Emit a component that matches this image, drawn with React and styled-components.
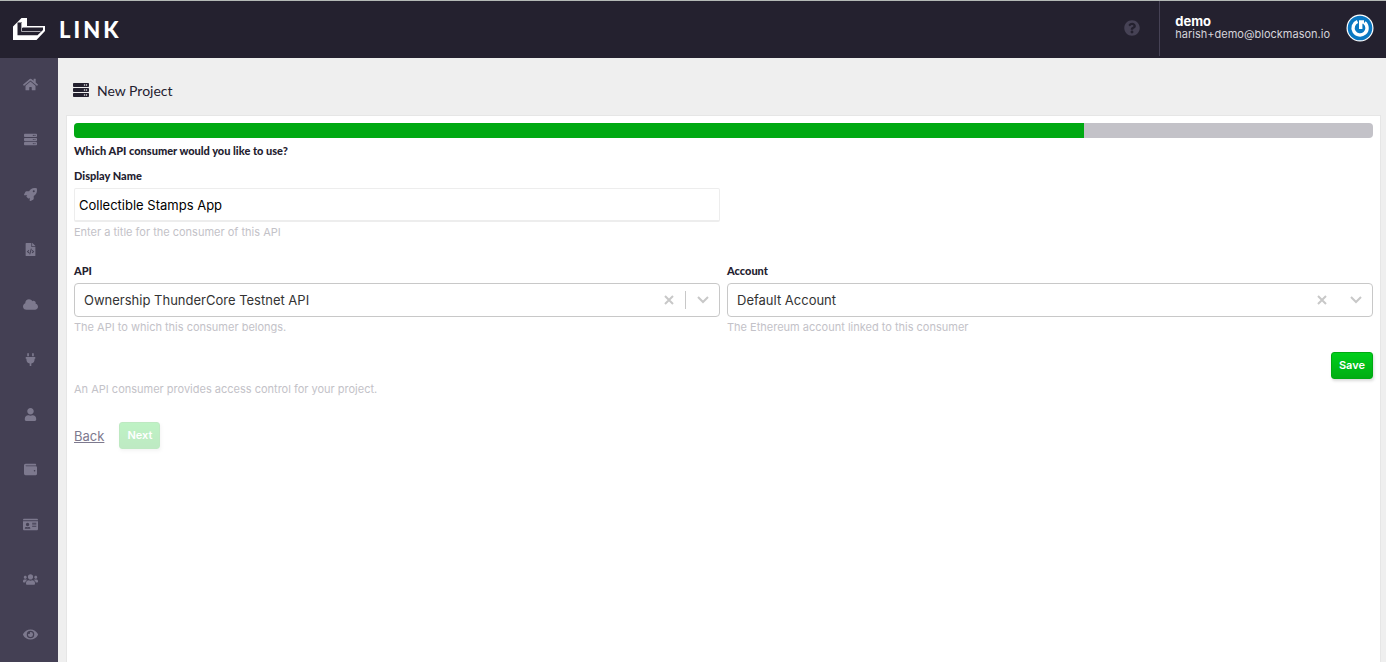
import React, { useState } from 'react'
import styled, { createGlobalStyle } from 'styled-components';
import {
    FaHome,
    FaServer,
    FaRocket,
    FaFileCode,
    FaCloud,
    FaPlug,
    FaUser,
    FaWallet,
    FaIdCard,
    FaUsers,
    FaEye,
    FaQuestionCircle,
} from 'react-icons/fa';

const navItems = [
    { label: 'Home', Icon: FaHome, wide: true },
    { label: 'Projects', Icon: FaServer },
    { label: 'Deployments', Icon: FaRocket },
    { label: 'Contracts', Icon: FaFileCode },
    { label: 'Networks', Icon: FaCloud, wide: true },
    { label: 'Connectors', Icon: FaPlug },
    { label: 'Profile', Icon: FaUser },
    { label: 'Wallets', Icon: FaWallet },
    { label: 'Accounts', Icon: FaIdCard, wide: true },
    { label: 'Team', Icon: FaUsers, wide: true },
    { label: 'Activity', Icon: FaEye, wide: true },
];

function Logo() {
    return (
        <LogoStyled href="#" aria-label="Link home">
            <svg width="34" height="24" viewBox="0 0 34 24" aria-hidden="true">
                <path fill="#fff" d="M9.5 1H15v8h18v5L24.5 23H1V9.5z" />
                <path fill="#24212f" d="M5.500 5.500H10V10.500H31V13L25.500 18.300H5.500z" />
                <path fill="#fff" d="M10 5h1v5.500h-1z" />
                <path fill="none" stroke="#a9a8ae" strokeWidth="1" d="M9.500 6v8.500h19" />
            </svg>
            <span>LINK</span>
        </LogoStyled>
    )
}

function Avatar() {
    return (
        <svg width="28" height="28" viewBox="0 0 28 28" aria-hidden="true">
            <circle cx="14" cy="14" r="13.5" fill="#fff" />
            <circle cx="14" cy="14" r="12.3" fill="#0a78c2" />
            <path
                fill="none"
                stroke="#fff"
                strokeWidth="3.4"
                d="M11.500 7.500A7 7 0 1 0 18.500 8.600M14.700 15V6.500M13 8h5"
            />
        </svg>
    )
}

function SelectField({ id, label, help, options, divided }) {
    const [value, setValue] = useState(options[0]);

    return (
        <Field>
            <Label htmlFor={id}>{label}</Label>
            <SelectBox>
                <select id={id} value={value} onChange={(e) => setValue(e.target.value)}>
                    <option value="" />
                    {options.map((option) => (
                        <option key={option}>{option}</option>
                    ))}
                </select>
                <ClearButton type="button" aria-label={`Clear ${label}`} onClick={() => setValue('')}>
                    <svg width="10" height="10" viewBox="0 0 10 10">
                        <path d="M1 1l8 8M9 1l-8 8" />
                    </svg>
                </ClearButton>
                <Divider $visible={divided} />
                <Chevron width="12" height="8" viewBox="0 0 12 8" aria-hidden="true">
                    <path d="M1 1l5 5 5-5" />
                </Chevron>
            </SelectBox>
            <Help>{help}</Help>
        </Field>
    )
}

function App() {
    const [name, setName] = useState('Collectible Stamps App');
    const step = 7;
    const steps = 9;

    return (
        <PageStyled>
            <GlobalStyle />
            <Header>
                <Logo />
                <HelpButton type="button" aria-label="Help">
                    <FaQuestionCircle />
                </HelpButton>
                <Account>
                    <div>
                        <strong>demo</strong>
                        <p>harish+demo@blockmason.io</p>
                    </div>
                    <Avatar />
                </Account>
            </Header>
            <Body>
                <Sidebar>
                    {navItems.map(({ label, Icon, wide }) => (
                        <NavLink key={label} href="#" aria-label={label} $wide={wide}>
                            <Icon />
                        </NavLink>
                    ))}
                </Sidebar>
                <Main>
                    <Title>
                        <FaServer />
                        New Project
                    </Title>
                    <Panel>
                        <Progress>
                            <div style={{ width: `${(step / steps) * 100}%` }} />
                        </Progress>
                        <Question>Which API consumer would you like to use?</Question>
                        <Columns>
                            <Field>
                                <Label htmlFor="display-name">Display Name</Label>
                                <TextInput
                                    id="display-name"
                                    value={name}
                                    onChange={(e) => setName(e.target.value)}
                                />
                                <Help>Enter a title for the consumer of this API</Help>
                            </Field>
                        </Columns>
                        <Columns>
                            <SelectField
                                id="api"
                                label="API"
                                help="The API to which this consumer belongs."
                                options={['Ownership ThunderCore Testnet API']}
                                divided
                            />
                            <SelectField
                                id="account"
                                label="Account"
                                help="The Ethereum account linked to this consumer"
                                options={['Default Account']}
                            />
                        </Columns>
                        <SaveRow>
                            <Button type="button">Save</Button>
                        </SaveRow>
                        <Help>An API consumer provides access control for your project.</Help>
                        <Actions>
                            <a href="#">Back</a>
                            <Button type="button" disabled>Next</Button>
                        </Actions>
                    </Panel>
                </Main>
            </Body>
        </PageStyled>
    )
}

const GlobalStyle = createGlobalStyle`
    *{
        box-sizing: border-box;
        margin: 0;
        padding: 0;
    }

    body{
        background: #efefef;
        color: #24212f;
        font-family: Inter, "Liberation Sans", sans-serif;
        font-size: 13px;
    }

    button, input, select{
        font-family: inherit;
    }

    svg{
        display: block;
    }
`;

const PageStyled = styled.div`
    display: flex;
    flex-direction: column;
    height: 100vh;
    overflow: hidden;
`;

const Header = styled.header`
    display: flex;
    flex-shrink: 0;
    height: 58px;
    background: #24212f;
    border-top: 1px solid #b4b9b6;
`;

const LogoStyled = styled.a`
    display: flex;
    align-items: center;
    gap: 13px;
    margin-right: auto;
    padding: 0 0 1px 12px;
    color: #fff;
    font-family: Lato, sans-serif;
    font-size: 22px;
    font-weight: 900;
    letter-spacing: 3px;
    text-decoration: none;
`;

const HelpButton = styled.button`
    padding: 0 19px 3px;
    border: none;
    background: none;
    color: #464255;
    font-size: 16px;
    cursor: pointer;
`;

const Account = styled.div`
    display: flex;
    align-items: center;
    gap: 16px;
    height: 55px;
    padding: 0 12px 2px 15px;
    border-left: 1px solid #464255;
    color: #fff;

    strong{
        display: block;
        font-size: 13px;
        font-weight: 700;
        line-height: 13px;
    }

    p{
        color: #d5d4da;
        font-size: 11px;
        line-height: 13px;
    }
`;

const Body = styled.div`
    display: flex;
    flex: 1;
    min-height: 0;
`;

const Sidebar = styled.nav`
    flex: 0 0 58px;
    overflow: hidden;
    background: #444054;
`;

const NavLink = styled.a`
    display: flex;
    align-items: center;
    justify-content: center;
    height: 55px;
    padding: 0 0 2px 3px;
    color: #7d798e;
    font-size: ${({ $wide }) => ($wide ? '15px' : '13px')};
`;

const Main = styled.main`
    display: flex;
    flex: 1;
    flex-direction: column;
    min-width: 0;
    padding: 0 5px 0 8px;
`;

const Title = styled.h1`
    display: flex;
    align-items: center;
    gap: 8px;
    height: 57px;
    padding: 7px 7px 0;
    font-family: Lato, sans-serif;
    font-size: 14px;
    font-weight: 400;

    svg{
        font-size: 16px;
    }
`;

const Panel = styled.section`
    flex: 1;
    padding: 7px;
    border: 1px solid #e6e6e6;
    border-bottom: none;
    background: #fff;
`;

const Progress = styled.div`
    height: 15px;
    overflow: hidden;
    border-radius: 4px;
    background: #c3c2c8;

    div{
        height: 100%;
        background: #00a912;
    }
`;

const Question = styled.h2`
    padding: 5px 0 9px;
    font-family: Lato, sans-serif;
    font-size: 11px;
    font-weight: 900;
    line-height: 16px;
`;

const Columns = styled.div`
    display: grid;
    grid-template-columns: 1fr 1fr;
    gap: 7px;

    & + &{
        margin-top: 23px;
    }
`;

const Field = styled.div`
    display: flex;
    flex-direction: column;
`;

const Label = styled.label`
    margin-bottom: 4px;
    font-family: Lato, sans-serif;
    font-size: 11px;
    font-weight: 900;
    line-height: 16px;
`;

const TextInput = styled.input`
    height: 34px;
    padding: 0 4px;
    border: 1px solid #ededed;
    border-bottom-width: 2px;
    border-radius: 2px;
    background: #fff;
    color: #000;
    font-size: 13px;
`;

const SelectBox = styled.div`
    display: flex;
    align-items: center;
    height: 34px;
    padding-right: 10px;
    border: 1px solid #c8c8c8;
    border-radius: 4px;

    select{
        flex: 1;
        min-width: 0;
        height: 100%;
        padding: 0 9px;
        border: none;
        background: none;
        color: #333;
        font-size: 13px;
        appearance: none;
    }
`;

const ClearButton = styled.button`
    padding: 11px;
    border: none;
    background: none;
    cursor: pointer;

    path{
        stroke: #c8c8c8;
        stroke-width: 2;
    }
`;

const Divider = styled.span`
    width: 1px;
    height: 18px;
    margin-right: 11px;
    background: ${({ $visible }) => ($visible ? '#c8c8c8' : 'transparent')};
`;

const Chevron = styled.svg`
    fill: none;
    stroke: #c8c8c8;
    stroke-width: 2;
`;

const Help = styled.p`
    padding-top: 2px;
    color: #c3c2c8;
    font-size: 11px;
    line-height: 16px;
`;

const SaveRow = styled.div`
    display: flex;
    justify-content: flex-end;
    margin-top: 17px;
`;

const Button = styled.button`
    height: 27px;
    padding: 0 7px 1px;
    border: 1px solid #00a912;
    border-radius: 3px;
    background: linear-gradient(#00cf1b, #00ad13);
    box-shadow: 1px 2px 3px rgba(0, 0, 0, .15);
    color: #fff;
    font-size: 11px;
    font-weight: 600;
    cursor: pointer;

    &:disabled{
        opacity: .25;
        cursor: default;
    }
`;

const Actions = styled.div`
    display: flex;
    align-items: center;
    gap: 15px;
    margin-top: 25px;

    a{
        color: #7d798e;
        font-size: 13px;
    }
`;

export default App;
